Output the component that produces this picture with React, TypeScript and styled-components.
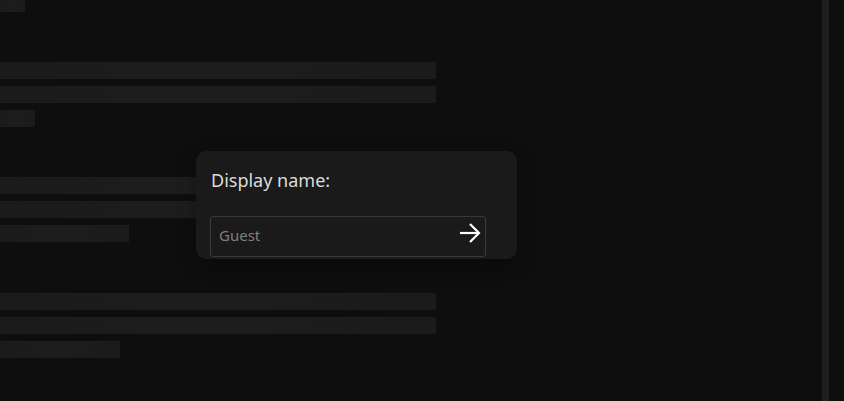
import React from 'react'
import styled, { createGlobalStyle } from 'styled-components'

const GlobalStyle = createGlobalStyle`
  html, body {
    margin: 0;
    padding: 0;
    background: #0e0e0e;
    font-family: 'Noto Sans', 'Open Sans', sans-serif;
    overflow: hidden;
  }
`

const Page = styled.div`
  position: relative;
  display: flex;
  width: 844px;
  height: 401px;
  overflow: hidden;
  background: #0e0e0e;
`

const Main = styled.div`
  width: 822px;
  flex: none;
  overflow: hidden;
`

const Divider = styled.div`
  width: 7px;
  flex: none;
  background: #1f1f1f;
`

const Feed = styled.div`
  display: flex;
  flex-direction: column;
  margin-top: -53px;
`

const Group = styled.div`
  display: flex;
  flex-direction: column;
  gap: 7px;
  margin-bottom: 50px;
  &:nth-child(3) {
    margin-bottom: 51px;
  }
`

const Bar = styled.div<{ $w: number }>`
  width: ${({ $w }) => $w}px;
  height: 17px;
  background: linear-gradient(90deg, #1b1b1b 0%, #1d1d1d 45%, #1b1b1b 100%);
`

const Dialog = styled.div`
  position: absolute;
  left: 196px;
  top: 151px;
  width: 321px;
  height: 108px;
  box-sizing: border-box;
  padding: 16px 31px 0 14px;
  background: #1a1a1a;
  border-radius: 10px;
  box-shadow: 0 6px 18px rgba(0, 0, 0, 0.35);
  display: flex;
  flex-direction: column;
`

const Title = styled.div`
  color: #dcdcdc;
  font-size: 18px;
  line-height: 26px;
  padding-left: 1px;
  margin-bottom: 23px;
`

const Field = styled.div`
  display: flex;
  align-items: center;
  justify-content: space-between;
  height: 41px;
  box-sizing: border-box;
  border: 1px solid #3a3a3a;
  border-radius: 3px;
  background: #1a1a1a;
  padding: 0 3px 0 8px;
`

const Input = styled.input`
  flex: 1;
  min-width: 0;
  background: transparent;
  border: none;
  outline: none;
  color: #dcdcdc;
  font-family: inherit;
  font-size: 15px;
  padding: 0 0 3px 0;
  &::placeholder {
    color: #7f7f7f;
  }
`

const Submit = styled.button`
  display: flex;
  align-items: center;
  justify-content: center;
  width: 24px;
  height: 24px;
  padding: 0;
  margin-bottom: 7px;
  background: none;
  border: none;
  color: #ffffff;
  cursor: pointer;
`

const ArrowIcon = () => (
  <svg width="22" height="22" viewBox="0 0 22 22" fill="none" stroke="currentColor" strokeWidth="2.2" strokeLinecap="butt" strokeLinejoin="miter">
    <path d="M1 11h19" />
    <path d="M11 2l9 9-9 9" />
  </svg>
)

const groups = [
  [436, 436, 25],
  [436, 436, 35],
  [436, 436, 129],
  [436, 436, 120],
  [436, 436, 90],
]

const App = () => {
  return (
    <>
      <GlobalStyle />
      <Page>
        <Main>
          <Feed>
            {groups.map((g, i) => (
              <Group key={i}>
                {g.map((w, j) => (
                  <Bar key={j} $w={w} />
                ))}
              </Group>
            ))}
          </Feed>
        </Main>
        <Divider />
        <Dialog>
          <Title>Display name:</Title>
          <Field>
            <Input placeholder="Guest" />
            <Submit aria-label="Continue">
              <ArrowIcon />
            </Submit>
          </Field>
        </Dialog>
      </Page>
    </>
  )
}

export default App
